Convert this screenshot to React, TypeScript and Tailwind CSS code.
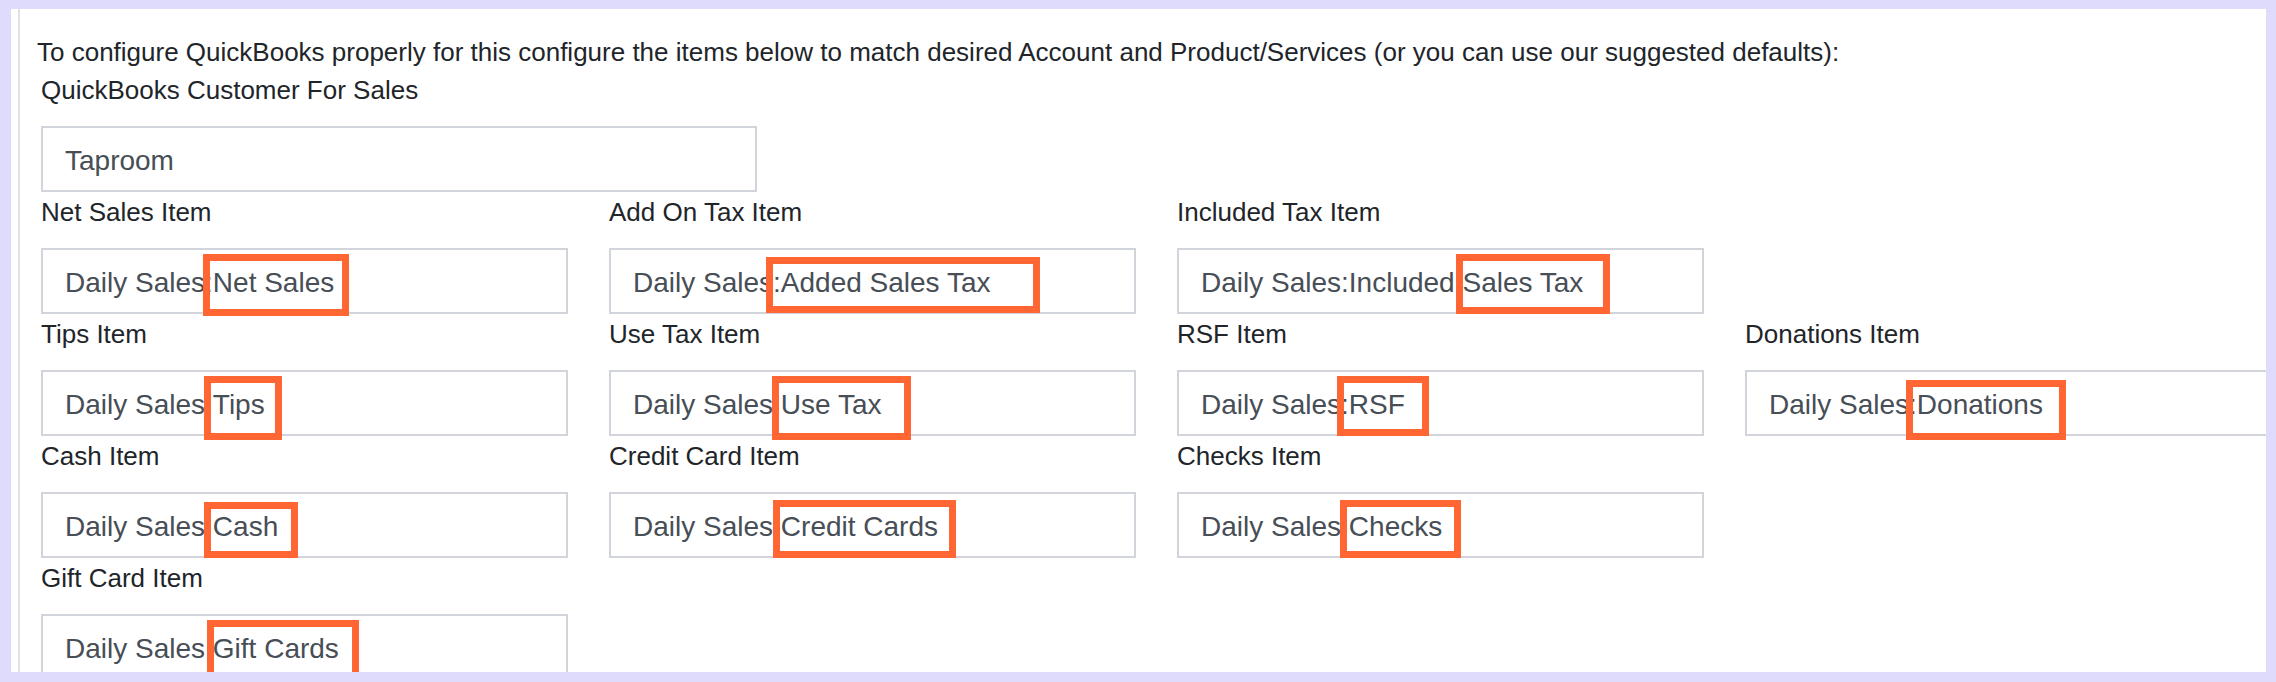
import React from 'react';

interface Field {
  label: string;
  value: string;
  mark: string;
}

const rows: (Field | null)[][] = [
  [
    { label: 'Net Sales Item', value: 'Daily Sales:Net Sales', mark: 'left-[160px] top-[4px] w-[146px] h-[62px]' },
    { label: 'Add On Tax Item', value: 'Daily Sales:Added Sales Tax', mark: 'left-[155px] top-[7px] w-[274px] h-[56px]' },
    { label: 'Included Tax Item', value: 'Daily Sales:Included Sales Tax', mark: 'left-[277px] top-[4px] w-[154px] h-[60px]' },
    null,
  ],
  [
    { label: 'Tips Item', value: 'Daily Sales:Tips', mark: 'left-[161px] top-[4px] w-[78px] h-[64px]' },
    { label: 'Use Tax Item', value: 'Daily Sales:Use Tax', mark: 'left-[161px] top-[4px] w-[139px] h-[64px]' },
    { label: 'RSF Item', value: 'Daily Sales:RSF', mark: 'left-[158px] top-[4px] w-[92px] h-[60px]' },
    { label: 'Donations Item', value: 'Daily Sales:Donations', mark: 'left-[159px] top-[8px] w-[160px] h-[60px]' },
  ],
  [
    { label: 'Cash Item', value: 'Daily Sales:Cash', mark: 'left-[161px] top-[8px] w-[94px] h-[56px]' },
    { label: 'Credit Card Item', value: 'Daily Sales:Credit Cards', mark: 'left-[162px] top-[6px] w-[183px] h-[58px]' },
    { label: 'Checks Item', value: 'Daily Sales:Checks', mark: 'left-[161px] top-[6px] w-[121px] h-[58px]' },
    null,
  ],
  [
    { label: 'Gift Card Item', value: 'Daily Sales:Gift Cards', mark: 'left-[164px] top-[4px] w-[152px] h-[60px]' },
    null,
    null,
    null,
  ],
];

const Label: React.FC<{ text: string }> = ({ text }) => (
  <div className="mt-[2px] text-[26px] leading-[36px] text-[#212529] whitespace-nowrap">{text}</div>
);

const Box: React.FC<{ value: string; mark?: string; width: string }> = ({ value, mark, width }) => (
  <div className={`relative mt-[18px] h-[66px] ${width} border-2 border-[#d1d5db] bg-white flex items-center pl-[22px] pt-[3px]`}>
    <span className="text-[28px] text-[#474e56] whitespace-nowrap">{value}</span>
    {mark && <div className={`absolute border-[7px] border-[#ff6634] ${mark}`} />}
  </div>
);

export default function App() {
  return (
    <div
      className="h-screen w-full bg-[#dedbfc] pt-[9px] pl-[11px] pr-[10px] pb-[10px]"
      style={{ fontFamily: '"Liberation Sans", Arial, Helvetica, sans-serif' }}
    >
      <div className="h-full bg-white overflow-hidden pl-[7px]">
        <div className="h-full border-l-2 border-[#e1e1e1] pl-[17px] pt-[25px]">
          <p className="text-[26px] leading-[36px] text-[#212529] whitespace-nowrap">
            To configure QuickBooks properly for this configure the items below to match desired Account and
            Product/Services (or you can use our suggested defaults):
          </p>
          <div className="ml-[4px]">
            <div>
              <Label text="QuickBooks Customer For Sales" />
              <Box value="Taproom" width="w-[716px]" />
            </div>
            <div className="grid grid-cols-[repeat(4,527px)] gap-x-[41px]">
              {rows.flat().map((f, i) =>
                f ? (
                  <div key={i}>
                    <Label text={f.label} />
                    <Box value={f.value} mark={f.mark} width="w-[527px]" />
                  </div>
                ) : (
                  <div key={i} />
                )
              )}
            </div>
          </div>
        </div>
      </div>
    </div>
  );
}
